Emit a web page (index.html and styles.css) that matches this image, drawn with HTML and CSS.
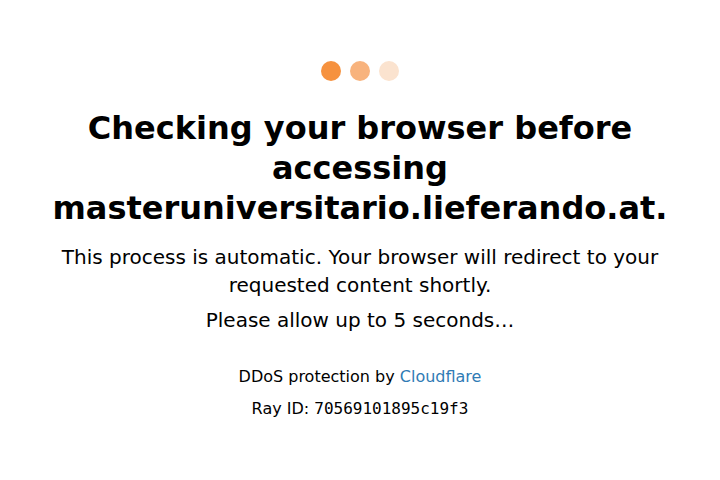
FILE: index.html
```html
<!DOCTYPE html>
<html>
<head>
<meta charset="utf-8">
<link rel="stylesheet" href="styles.css">
</head>
<body>
<div class="wrapper">
  <div class="dots">
    <span class="dot d1"></span>
    <span class="dot d2"></span>
    <span class="dot d3"></span>
  </div>
  <h1 class="title">Checking your browser before accessing masteruniversitario.lieferando.at.</h1>
  <p class="text">This process is automatic. Your browser will redirect to your requested content shortly.</p>
  <p class="text wait">Please allow up to 5 seconds&hellip;</p>
  <div class="footer">
    <p class="footer-line">DDoS protection by <a class="link" href="#">Cloudflare</a></p>
    <p class="footer-line">Ray ID: <code class="ray">70569101895c19f3</code></p>
  </div>
</div>
</body>
</html>
```
FILE: styles.css
```css
html, body {
  margin: 0;
  padding: 0;
  background: #ffffff;
}
body {
  font-family: "DejaVu Sans", sans-serif;
  color: #000000;
}
.wrapper {
  width: 640px;
  margin: 0 auto;
  padding-top: 61px;
  text-align: center;
}
.dots {
  display: flex;
  justify-content: center;
  gap: 9px;
  height: 20px;
}
.dot {
  width: 20px;
  height: 20px;
  border-radius: 50%;
  display: block;
}
.d1 { background: #f6923f; }
.d2 { background: #f8b37d; }
.d3 { background: #fbe3cf; }
.title {
  font-size: 32px;
  line-height: 40px;
  font-weight: bold;
  margin: 27px 0 15px;
}
.text {
  font-size: 20px;
  line-height: 28px;
  margin: 0;
}
.wait {
  margin-top: 7px;
}
.footer {
  margin-top: 27px;
}
.footer-line {
  font-size: 16px;
  line-height: 32px;
  margin: 0;
}
.link {
  color: #2f7bb5;
  text-decoration: none;
}
.ray {
  font-family: "DejaVu Sans Mono", monospace;
  font-size: 16px;
}
```
